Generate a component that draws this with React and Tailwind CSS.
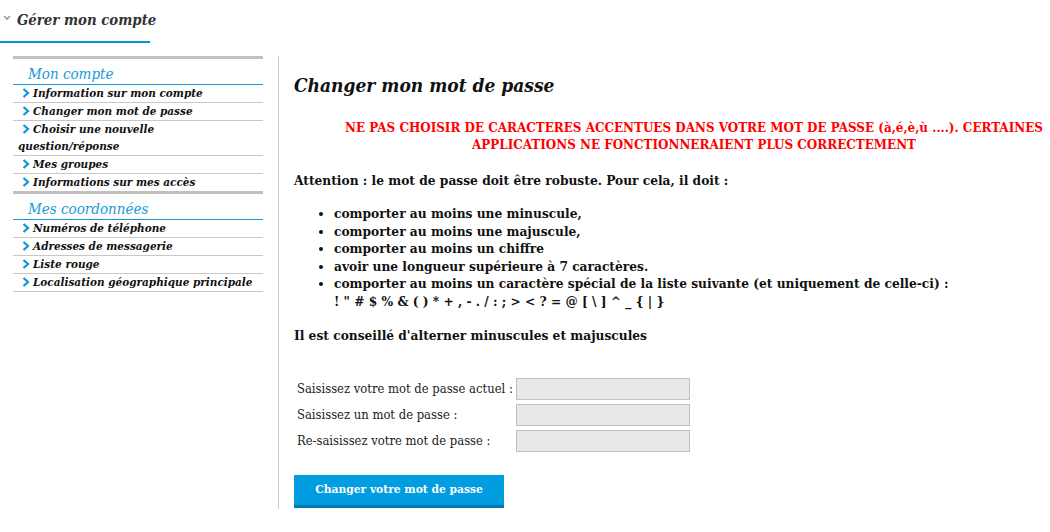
import React from "react";

const slab = { fontFamily: '"DejaVu Serif Condensed", "DejaVu Serif", serif' };

const compte = [
  ["Information sur mon compte"],
  ["Changer mon mot de passe"],
  ["Choisir une nouvelle", "question/réponse"],
  ["Mes groupes"],
  ["Informations sur mes accès"],
];

const coordonnees = [
  ["Numéros de téléphone"],
  ["Adresses de messagerie"],
  ["Liste rouge"],
  ["Localisation géographique principale"],
];

const rules = [
  "comporter au moins une minuscule,",
  "comporter au moins une majuscule,",
  "comporter au moins un chiffre",
  "avoir une longueur supérieure à 7 caractères.",
];

function Chevron() {
  return (
    <svg width="8" height="10" viewBox="0 0 8 10" className="inline-block ml-[4px] mr-[3px] -mt-[2px]">
      <path d="M1.5 1 L6 5 L1.5 9" fill="none" stroke="#0a96d4" strokeWidth="2.2" />
    </svg>
  );
}

function MenuGroup({ title, items }) {
  return (
    <div>
      <div className="border-b border-[#1a96d4] pl-[15px] pt-[5px] text-[15px] italic leading-[20px] text-[#1a9ad6]">
        {title}
      </div>
      {items.map(([first, second]) => (
        <div
          key={first}
          className="border-b border-[#c8c8c8] pl-[5px] text-[11.65px] font-bold italic leading-[17px] text-[#111]"
        >
          <Chevron />
          {first}
          {second && (
            <>
              <br />
              {second}
            </>
          )}
        </div>
      ))}
    </div>
  );
}

function Field({ label }) {
  return (
    <div className="flex items-center h-[26px]">
      <div className="w-[222px] pl-[3px] text-[12.9px] text-[#222]">{label}</div>
      <div className="w-[174px] h-[22px] bg-[#e8e8e8] border border-[#c0c0c0]" />
    </div>
  );
}

export default function App() {
  return (
    <div className="w-[1050px] h-[532px] bg-white overflow-hidden text-[#111]" style={slab}>
      <div className="h-[43px] w-[150px] border-b-2 border-[#0a96d4] flex items-center whitespace-nowrap">
        <svg width="8" height="6" viewBox="0 0 8 6" className="shrink-0 ml-[3px] -mt-[6px]">
          <path d="M1 1 L4 4 L7 1" fill="none" stroke="#9a9a9a" strokeWidth="1.6" />
        </svg>
        <span className="shrink-0 ml-[6px] text-[14.8px] font-bold italic text-[#333]">Gérer mon compte</span>
      </div>

      <div className="flex mt-[13px]">
        <div className="w-[278px] pl-[13px] pr-[15px]">
          <div className="border-t-[3px] border-[#c0c0c0]">
            <MenuGroup title="Mon compte" items={compte} />
          </div>
          <div className="border-t-[3px] border-[#c0c0c0] -mt-px">
            <MenuGroup title="Mes coordonnées" items={coordonnees} />
          </div>
        </div>

        <div className="flex-1 h-[453px] border-l border-[#c8c8c8] pl-[15px]">
          <h1 className="mt-[16px] text-[19px] font-bold italic leading-[26px]">Changer mon mot de passe</h1>

          <div className="ml-[44px] mt-[21px] text-center text-[13.3px] font-bold leading-[17px] text-[#ff0000]">
            NE PAS CHOISIR DE CARACTERES ACCENTUES DANS VOTRE MOT DE PASSE (à,é,è,ù ....). CERTAINES
            <br />
            APPLICATIONS NE FONCTIONNERAIENT PLUS CORRECTEMENT
          </div>

          <p className="mt-[18px] text-[13.6px] font-bold leading-[18px]">
            Attention : le mot de passe doit être robuste. Pour cela, il doit :
          </p>

          <ul className="mt-[16px] pl-[40px] list-disc text-[13.6px] font-bold leading-[17.6px]">
            {rules.map((r) => (
              <li key={r}>{r}</li>
            ))}
            <li>
              comporter au moins un caractère spécial de la liste suivante (et uniquement de celle-ci) :
              <br />
              ! " # $ % &amp; ( ) * + , - . / : ; &gt; &lt; ? = @ [ \ ] ^ _ {"{"} | {"}"}
            </li>
          </ul>

          <p className="mt-[15px] text-[13.6px] font-bold leading-[18px]">
            Il est conseillé d'alterner minuscules et majuscules
          </p>

          <div className="mt-[32px]">
            <Field label="Saisissez votre mot de passe actuel :" />
            <Field label="Saisissez un mot de passe :" />
            <Field label="Re-saisissez votre mot de passe :" />
          </div>

          <button className="mt-[21px] w-[210px] h-[33px] bg-[#009de0] border-b-[3px] border-[#0079ad] text-white text-[11.9px] font-bold">
            Changer votre mot de passe
          </button>
        </div>
      </div>
    </div>
  );
}
